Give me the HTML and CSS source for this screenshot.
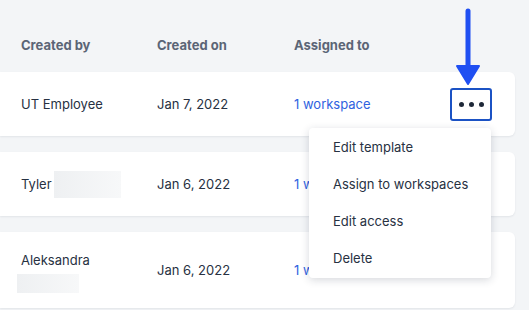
FILE: index.html
```html
<!DOCTYPE html>
<html lang="en">
<head>
    <meta charset="UTF-8">
    <meta name="viewport" content="width=device-width, initial-scale=1.0">
    <title>Templates</title>
    <link rel="stylesheet" href="styles.css">
</head>
<body>
  <div class="table">
    <div class="head">
      <span class="col-by">Created by</span>
      <span class="col-on">Created on</span>
      <span class="col-to">Assigned to</span>
    </div>

    <div class="row">
      <span class="col-by">UT Employee</span>
      <span class="col-on">Jan 7, 2022</span>
      <a href="#" class="col-to link">1 workspace</a>
      <div class="actions">
        <button class="more-button"><span class="dot"></span><span class="dot"></span><span class="dot"></span></button>
        <ul class="menu">
          <li>Edit template</li>
          <li>Assign to workspaces</li>
          <li>Edit access</li>
          <li>Delete</li>
        </ul>
      </div>
    </div>

    <div class="row">
      <span class="col-by">Tyler <span class="redact redact-inline"></span></span>
      <span class="col-on">Jan 6, 2022</span>
      <a href="#" class="col-to link">1 workspace</a>
    </div>

    <div class="row row-tall">
      <span class="col-by stacked">Aleksandra <span class="redact redact-block"></span></span>
      <span class="col-on">Jan 6, 2022</span>
      <a href="#" class="col-to link">1 workspace</a>
    </div>
  </div>

  <!-- annotation arrow -->
  <svg class="arrow" width="30" height="80" viewBox="0 0 30 80">
    <line x1="14" y1="4" x2="14" y2="66" stroke="#1f4ff2" stroke-width="5" stroke-linecap="round" />
    <polygon points="3,59 25,59 14,77" fill="#1f4ff2" stroke="#1f4ff2" stroke-width="2" stroke-linejoin="round" />
  </svg>
</body>
</html>
```

FILE: styles.css
```css
html, body {
    margin: 0;
    padding: 0;
    background-color: #f3f5f7;
    font-family: 'Inter', 'Liberation Sans', sans-serif;
    color: #273142;
    overflow: hidden;
}

.table {
    width: 515px;
    position: relative;
}

.head {
    display: flex;
    align-items: center;
    height: 72px;
    padding-top: 18px;
    box-sizing: border-box;
    font-size: 13px;
    font-weight: 700;
    color: #5b6576;
}

.row {
    display: flex;
    align-items: center;
    height: 64px;
    margin-bottom: 16px;
    background-color: #ffffff;
    border-radius: 0 6px 6px 0;
    box-shadow: 0 1px 2px rgba(30, 40, 60, 0.08);
    font-size: 13px;
    position: relative;
}

.row-tall {
    height: 76px;
}

.col-by {
    width: 157px;
    flex-shrink: 0;
    padding-left: 21px;
    box-sizing: border-box;
    display: flex;
    align-items: center;
    gap: 2px;
}

.col-on {
    width: 137px;
    flex-shrink: 0;
}

.col-to {
    width: 156px;
    flex-shrink: 0;
}

.link {
    color: #2f62e0;
    text-decoration: none;
}

.stacked {
    flex-direction: column;
    align-items: flex-start;
    gap: 6px;
    margin-top: 4px;
}

.redact {
    display: block;
    background: linear-gradient(90deg, #eef0f2, #f7f8f9);
}

.redact-inline {
    width: 67px;
    height: 27px;
}

.redact-block {
    width: 62px;
    height: 19px;
    margin-left: -4px;
}

.actions {
    position: relative;
}

.more-button {
    display: flex;
    align-items: center;
    justify-content: center;
    gap: 5px;
    width: 42px;
    height: 33px;
    padding: 0;
    background-color: #ffffff;
    border: 2px solid #1b52c4;
    border-radius: 3px;
    cursor: pointer;
}

.dot {
    width: 5px;
    height: 5px;
    border-radius: 50%;
    background-color: #1e2838;
}

.menu {
    position: absolute;
    top: 40px;
    right: 1px;
    width: 182px;
    margin: 0;
    padding: 1px 0 1px;
    list-style: none;
    background-color: #ffffff;
    border-radius: 4px;
    box-shadow: 0 2px 8px rgba(30, 40, 60, 0.18);
    z-index: 10;
}

.menu li {
    height: 37px;
    line-height: 37px;
    padding-left: 24px;
    font-size: 13px;
    color: #273142;
}

.arrow {
    position: absolute;
    left: 454px;
    top: 7px;
}
```
